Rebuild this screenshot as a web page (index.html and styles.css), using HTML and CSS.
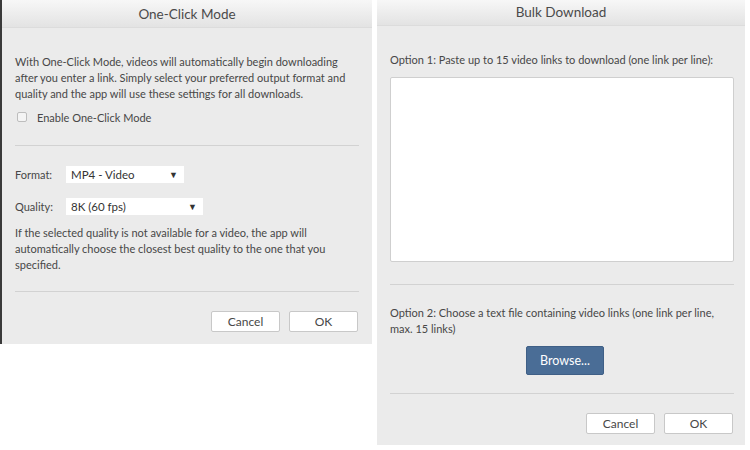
FILE: index.html
```html
<!DOCTYPE html>
<html>
<head>
<meta charset="utf-8">
<link rel="stylesheet" href="styles.css">
</head>
<body>
<div class="page">
  <div class="dialog dialog-left">
    <div class="header">One-Click Mode</div>
    <div class="body">
      <p class="text intro">With One-Click Mode, videos will automatically begin downloading after you enter a link. Simply select your preferred output format and quality and the app will use these settings for all downloads.</p>
      <div class="check-row"><span class="checkbox"></span><span>Enable One-Click Mode</span></div>
      <div class="sep sep-1"></div>
      <div class="field-row row-format"><span class="label">Format:</span><div class="select select-format"><span>MP4 - Video</span><span class="arrow">▼</span></div></div>
      <div class="field-row row-quality"><span class="label">Quality:</span><div class="select select-quality"><span>8K (60 fps)</span><span class="arrow">▼</span></div></div>
      <p class="text note">If the selected quality is not available for a video, the app will automatically choose the closest best quality to the one that you specified.</p>
      <div class="sep sep-2"></div>
      <div class="buttons"><button class="btn">Cancel</button><button class="btn">OK</button></div>
    </div>
  </div>
  <div class="dialog dialog-right">
    <div class="header">Bulk Download</div>
    <div class="body">
      <p class="text opt1">Option 1: Paste up to 15 video links to download (one link per line):</p>
      <div class="textarea"></div>
      <div class="sep sep-3"></div>
      <p class="text opt2">Option 2: Choose a text file containing video links (one link per line, max. 15 links)</p>
      <div class="browse-row"><button class="browse">Browse...</button></div>
      <div class="sep sep-4"></div>
      <div class="buttons"><button class="btn">Cancel</button><button class="btn">OK</button></div>
    </div>
  </div>
</div>
</body>
</html>
```
FILE: styles.css
```css
* { box-sizing: border-box; }
html, body { margin: 0; padding: 0; background: #fff; }
body { font-family: Lato, "Open Sans", sans-serif; color: #474747; font-size: 11px; letter-spacing: 0; }
.page { display: flex; align-items: flex-start; width: 750px; height: 450px; }
.dialog { background: #ebebeb; display: flex; flex-direction: column; }
.dialog-left { width: 372px; height: 344px; border-left: 2px solid #3a3a3a; }
.dialog-right { width: 368px; height: 445px; margin-left: 5px; }
.header {
  background: linear-gradient(#f7f7f7, #e3e3e3);
  border-bottom: 1px solid #dcdcdc;
  text-align: center; font-size: 13.5px; color: #4a4a4a;
}
.dialog-left .header { height: 28px; line-height: 28px; }
.dialog-right .header { height: 26px; line-height: 24px; }
.dialog-left .body { padding: 0 13px 0 13px; }
.dialog-right .body { padding: 0 11px 0 13px; }
.text { margin: 0; line-height: 16px; }
.intro { margin-top: 26px; }
.check-row { display: flex; align-items: center; height: 16px; margin-top: 7px; }
.checkbox { width: 10px; height: 10px; border: 1px solid #bdbdbd; border-radius: 2px; background: #f4f4f4; margin: 0 10px 0 2px; }
.sep { height: 1px; background: #d2d2d2; }
.sep-1 { margin-top: 20px; }
.field-row { display: flex; align-items: center; }
.row-format { margin-top: 20px; }
.row-quality { margin-top: 15px; }
.label { width: 51px; }
.select { background: #fff; height: 17px; display: flex; align-items: center; justify-content: space-between; padding: 0 6px 0 5px; font-size: 11.5px; color: #333; }
.select-format { width: 118px; }
.select-quality { width: 137px; }
.arrow { font-size: 9px; color: #333; }
.note { margin-top: 10px; }
.sep-2 { margin-top: 18px; }
.buttons { display: flex; justify-content: flex-end; gap: 9px; margin-top: 19px; padding-right: 1px; }
.btn {
  width: 69px; height: 21px; background: #fff; border: 1px solid #c8c8c8; border-radius: 2px;
  font-family: Lato, "Open Sans", sans-serif; font-size: 12px; color: #474747; padding: 0;
}
.opt1 { margin-top: 26px; }
.textarea { margin-top: 9px; height: 185px; background: #fff; border: 1px solid #cfcfcf; border-radius: 2px; }
.sep-3 { margin-top: 22px; }
.opt2 { margin-top: 20px; }
.browse-row { display: flex; justify-content: center; margin-top: 9px; padding-left: 6px; }
.browse {
  width: 78px; height: 29px; background: #4a6d96; color: #fff; border: 1px solid #3f5f86; border-radius: 2px;
  font-family: Lato, "Open Sans", sans-serif; font-size: 12.5px; padding: 0;
}
.sep-4 { margin-top: 18px; }
```
